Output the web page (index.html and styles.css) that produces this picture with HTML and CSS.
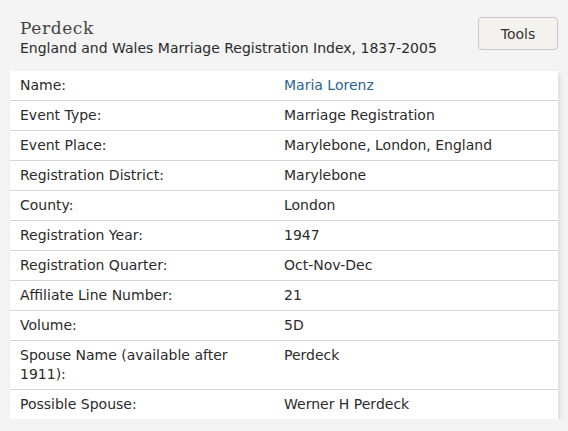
FILE: index.html
```html
<!DOCTYPE html>
<html>
<head>
<meta charset="utf-8">
<link rel="stylesheet" href="styles.css">
</head>
<body>
<div class="page">
  <header class="head">
    <div class="titles">
      <h1 class="title">Perdeck</h1>
      <div class="subtitle">England and Wales Marriage Registration Index, 1837-2005</div>
    </div>
    <button class="tools">Tools</button>
  </header>
  <div class="card">
    <div class="row"><div class="label">Name:</div><div class="value link">Maria Lorenz</div></div>
    <div class="row"><div class="label">Event Type:</div><div class="value">Marriage Registration</div></div>
    <div class="row"><div class="label">Event Place:</div><div class="value">Marylebone, London, England</div></div>
    <div class="row"><div class="label">Registration District:</div><div class="value">Marylebone</div></div>
    <div class="row"><div class="label">County:</div><div class="value">London</div></div>
    <div class="row"><div class="label">Registration Year:</div><div class="value">1947</div></div>
    <div class="row"><div class="label">Registration Quarter:</div><div class="value">Oct-Nov-Dec</div></div>
    <div class="row"><div class="label">Affiliate Line Number:</div><div class="value">21</div></div>
    <div class="row"><div class="label">Volume:</div><div class="value">5D</div></div>
    <div class="row"><div class="label">Spouse Name (available after 1911):</div><div class="value">Perdeck</div></div>
    <div class="row"><div class="label">Possible Spouse:</div><div class="value">Werner H Perdeck</div></div>
  </div>
</div>
</body>
</html>
```
FILE: styles.css
```css
html, body {
  margin: 0;
  padding: 0;
  background: #f3f3f3;
}
body {
  font-family: "DejaVu Sans", Verdana, sans-serif;
  font-size: 14px;
  color: #2b2b2b;
}
.page {
  padding: 0 10px;
}
.head {
  display: flex;
  justify-content: space-between;
  align-items: flex-start;
  padding: 17px 0 0 10px;
  height: 54px;
}
.titles {
  padding-top: 2px;
}
.title {
  margin: 0;
  font-family: "DejaVu Serif", Georgia, serif;
  font-weight: normal;
  font-size: 17px;
  line-height: 19px;
  color: #444;
  letter-spacing: 0.6px;
}
.subtitle {
  line-height: 20px;
}
.tools {
  width: 80px;
  height: 33px;
  background: #f4f2ee;
  border: 1px solid #c8c8c8;
  border-radius: 4px;
  font-family: "DejaVu Sans", Verdana, sans-serif;
  font-size: 14px;
  color: #333;
  padding: 0;
}
.card {
  background: #fff;
  width: 548px;
  box-shadow: 2px 2px 4px rgba(0,0,0,0.1);
}
.row {
  display: grid;
  grid-template-columns: 264px 1fr;
  border-top: 1px solid #d6d6d6;
  padding: 5px 10px;
  line-height: 19px;
}
.row:first-child {
  border-top: none;
}
.label {
  padding-right: 20px;
}
.link {
  color: #2a6496;
}
```
